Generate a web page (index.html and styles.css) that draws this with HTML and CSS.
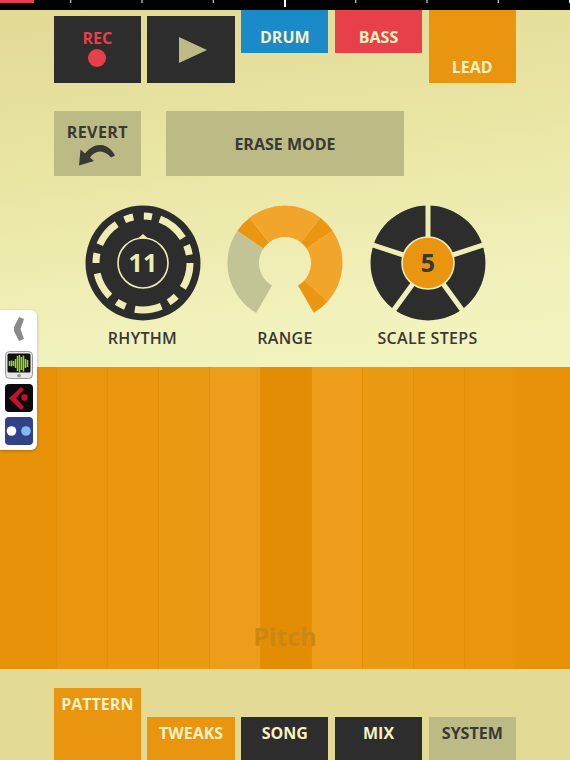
FILE: index.html
```html
<!DOCTYPE html>
<html lang="en">
<head>
  <meta charset="UTF-8" />
  <title>Pattern</title>
  <link rel="stylesheet" href="styles.css">
</head>
<body>
  <div class="app">

    <!-- TOP PANEL -->
    <section class="panel">
      <div class="ruler"></div>

      <div class="keys">
        <button class="key dark rec">REC<span class="dot"></span></button>
        <button class="key dark play">
          <svg width="28" height="26" viewBox="0 0 28 26"><polygon points="0,0 28,13 0,26" /></svg>
        </button>
        <button class="key short blue">DRUM</button>
        <button class="key short red">BASS</button>
        <button class="key orange lead">LEAD</button>
      </div>

      <div class="tools">
        <button class="tool revert">REVERT
          <svg width="38" height="22" viewBox="0 0 38 22"><path d="M1 21.5 L2.5 5.5 L7 9.5 C12 3.5 17 .5 23 1 C29 1.5 34 5.5 37 11.5 L33 13.5 C30 10 26 7.5 22 7.5 C18 7.5 14.5 10 12 13.5 L16 17 Z" /></svg>
        </button>
        <button class="tool erase">ERASE MODE</button>
      </div>

      <div class="dials">
        <div class="dial">
          <svg width="116" height="116" viewBox="-58 -58 116 116">
            <circle r="57.5" fill="#2e2d2d" />
            <circle r="47" fill="none" stroke="#eeedb4" stroke-width="7" pathLength="360" transform="rotate(-89)"
              stroke-dasharray="10 10 37 10 12 10 32 13 12 10 33 12 12 11 32 13 12 11 33 11 11 13" />
            <circle r="25" fill="none" stroke="#eeedb4" stroke-width="1.6" />
            <polygon points="-5,-24.5 0,-29 5,-24.5" fill="#eeedb4" />
            <text class="dial-num light" y="9">11</text>
          </svg>
          <span>RHYTHM</span>
        </div>
        <div class="dial">
          <svg width="116" height="116" viewBox="-58 -58 116 116">
            <path fill="#c3c495" d="M-28.75 49.8 A57.5 57.5 0 0 1 -47.7 -32.2 L-21.6 -14.5 A26 26 0 0 0 -13 22.5 Z" />
            <path fill="#ea9611" d="M-47.7 -32.2 A57.5 57.5 0 0 1 -35.4 -45.3 L-16 -20.5 A26 26 0 0 0 -21.6 -14.5 Z" />
            <path fill="#f1a52b" d="M-35.4 -45.3 A57.5 57.5 0 0 1 35.4 -45.3 L16 -20.5 A26 26 0 0 0 -16 -20.5 Z" />
            <path fill="#ea9611" d="M35.4 -45.3 A57.5 57.5 0 0 1 47.7 -32.2 L21.6 -14.5 A26 26 0 0 0 16 -20.5 Z" />
            <path fill="#f1a52b" d="M47.7 -32.2 A57.5 57.5 0 0 1 42.7 38.5 L19.3 17.4 A26 26 0 0 0 21.6 -14.5 Z" />
            <path fill="#ea9611" d="M42.7 38.5 A57.5 57.5 0 0 1 28.75 49.8 L13 22.5 A26 26 0 0 0 19.3 17.4 Z" />
          </svg>
          <span>RANGE</span>
        </div>
        <div class="dial">
          <svg width="116" height="116" viewBox="-58 -58 116 116">
            <mask id="spokes">
              <circle r="58" fill="#fff" />
              <g stroke="#000" stroke-width="5">
                <line x1="0" y1="0" x2="0" y2="-60" />
                <line x1="0" y1="0" x2="0" y2="-60" transform="rotate(72)" />
                <line x1="0" y1="0" x2="0" y2="-60" transform="rotate(144)" />
                <line x1="0" y1="0" x2="0" y2="-60" transform="rotate(216)" />
                <line x1="0" y1="0" x2="0" y2="-60" transform="rotate(288)" />
              </g>
            </mask>
            <circle r="57.5" fill="#2e2d2d" mask="url(#spokes)" />
            <circle r="26" fill="#e9950f" stroke="#eeedb4" stroke-width="1.6" />
            <text class="dial-num" y="9">5</text>
          </svg>
          <span>SCALE STEPS</span>
        </div>
      </div>
    </section>

    <!-- PITCH PAD -->
    <section class="pad">
      <div class="strip s1"></div>
      <div class="strip s2"></div>
      <div class="strip s3"></div>
      <div class="strip s4"></div>
      <div class="strip s5"></div>
      <div class="strip s4"></div>
      <div class="strip s3"></div>
      <div class="strip s2"></div>
      <div class="strip s1"></div>
      <span class="pad-label">Pitch</span>
    </section>

    <!-- TABS -->
    <nav class="tabs">
      <button class="tab orange active">PATTERN</button>
      <button class="tab orange">TWEAKS</button>
      <button class="tab dark">SONG</button>
      <button class="tab dark">MIX</button>
      <button class="tab khaki">SYSTEM</button>
    </nav>

    <!-- APP SWITCHER -->
    <aside class="switcher">
      <svg class="chevron" width="10" height="24" viewBox="0 0 10 24"><polygon points="5,0 10,2 6.5,12 10,22 5,24 0,14 0,10" /></svg>
      <svg width="28" height="28" viewBox="0 0 28 28">
        <rect x=".5" y=".5" width="27" height="27" rx="4" fill="#e6e6e6" stroke="#999" />
        <rect x="2.5" y="2.5" width="23" height="19" rx="1.5" fill="#111" />
        <path stroke="#9ad82a" stroke-width="1.5" d="M4.5 10v5M6.5 9.5v6M8.5 10v5M10.5 8v9M12.5 5v15M14.5 4v17M16.5 6v13M18.5 4.5v16M20.5 8v9M22.5 9v7" />
        <circle cx="14" cy="24.6" r="1.9" fill="#999" />
      </svg>
      <svg width="28" height="28" viewBox="0 0 28 28">
        <rect width="28" height="28" rx="4" fill="#0b0b0b" />
        <polygon points="16,3 19,5.5 11,14 19,23 16,26 4,14.5" fill="#c8102e" />
        <circle cx="19.5" cy="13.5" r="3.2" fill="#c8102e" />
      </svg>
      <svg width="28" height="28" viewBox="0 0 28 28">
        <rect width="28" height="28" rx="4" fill="#2f4386" />
        <circle cx="6.5" cy="14" r="4.8" fill="#fff" />
        <circle cx="21" cy="14" r="4.8" fill="#82baf5" />
      </svg>
    </aside>
  </div>
</body>
</html>
```

FILE: styles.css
```css
:root {
  --dark: #2e2d2d;
  --khaki: #bdbb85;
  --orange: #e9950f;
  --red: #e8404a;
  --blue: #1b8ac8;
  --cream: #f6f2c2;
  --ink: #3a3834;
}
* {
  box-sizing: border-box;
}
body {
  margin: 0;
  font-family: 'Open Sans', sans-serif;
  background: #e3da96;
  overflow: hidden;
}
button {
  border: none;
  padding: 0;
  font: inherit;
  font-weight: 700;
  font-size: 16px;
  border-radius: 0;
}
.app {
  position: relative;
  width: 570px;
  height: 760px;
  display: flex;
  flex-direction: column;
}

/* top panel */
.panel {
  height: 367px;
  background: linear-gradient(172deg, #e2d994 0%, #e9e5a3 40%, #f2f2bd 82%, #f3f3bf 100%);
}
.ruler {
  height: 10px;
  background-color: #000;
  background-image:
    linear-gradient(var(--red), var(--red)),
    linear-gradient(#fff, #fff),
    linear-gradient(to right, transparent 70.5px, #fff 70.5px);
  background-repeat: no-repeat, no-repeat, repeat-x;
  background-size: 34px 3px, 2px 7px, 71.25px 3px;
  background-position: 0 0, 284px 0, 0 0;
}
.keys {
  display: grid;
  grid-template-columns: repeat(5, 87.3px);
  column-gap: 6.45px;
  align-items: start;
  padding-left: 53.7px;
}
.key {
  height: 73px;
}
.dark { background: var(--dark); color: var(--cream); }
.orange { background: var(--orange); color: var(--cream); }
.khaki { background: var(--khaki); color: var(--ink); }
.blue { background: var(--blue); color: var(--cream); }
.red { background: var(--red); color: var(--cream); }

.rec, .play {
  height: 67px;
  margin-top: 6px;
}
.rec {
  display: flex;
  flex-direction: column;
  align-items: center;
  color: var(--red);
  padding-top: 11px;
  line-height: 22px;
}
.dot {
  width: 18px;
  height: 18px;
  border-radius: 50%;
  background: var(--red);
}
.play svg {
  display: block;
  margin-left: 31.5px;
  fill: var(--khaki);
}
.key.short {
  height: 43px;
  padding-top: 10px;
}
.lead {
  display: flex;
  align-items: flex-end;
  justify-content: center;
  padding-bottom: 5px;
}

.tools {
  display: flex;
  gap: 25.3px;
  padding: 28px 0 0 53.7px;
}
.tool {
  height: 65px;
  background: var(--khaki);
  color: var(--ink);
}
.revert {
  width: 87.3px;
  display: flex;
  flex-direction: column;
  align-items: center;
  padding-top: 9px;
  line-height: 24px;
  letter-spacing: 0.4px;
}
.revert svg {
  fill: var(--ink);
}
.erase {
  width: 237.4px;
}

.dials {
  display: flex;
  gap: 26.5px;
  padding: 29px 0 0 84.5px;
}
.dial {
  width: 116px;
  display: flex;
  flex-direction: column;
  align-items: center;
  gap: 6px;
  font-weight: 600;
  font-size: 16px;
  line-height: 22px;
  letter-spacing: 0.3px;
  color: var(--ink);
  white-space: nowrap;
}
.dial svg {
  display: block;
}
.dial-num {
  font-weight: 700;
  font-size: 25px;
  text-anchor: middle;
  fill: var(--ink);
}
.dial-num.light {
  fill: #eeedb4;
}

/* pitch pad */
.pad {
  position: relative;
  height: 301.5px;
  padding: 0 55px 0 56px;
  background: #e8920a;
  display: flex;
}
.strip {
  flex: 1;
  border-left: 1px solid #e58f09;
}
.s1 { background: #e9950e; }
.s2 { background: #ea970f; }
.s3 { background: #eb9a14; }
.s4 { background: #ed9d19; }
.s5 { background: #e38d05; }
.pad-label {
  position: absolute;
  left: 0;
  right: 0;
  bottom: 16px;
  text-align: center;
  font-weight: 700;
  font-size: 25px;
  color: #c98714;
}

/* tabs */
.tabs {
  flex: 1;
  display: grid;
  grid-template-columns: repeat(5, 87.3px);
  column-gap: 6.45px;
  align-items: end;
  padding-left: 53.7px;
  background: #e3da96;
}
.tab {
  height: 43px;
  padding-bottom: 11px;
}
.tab.active {
  height: 72px;
  padding-bottom: 40px;
}

/* app switcher */
.switcher {
  position: absolute;
  left: 0;
  top: 310px;
  width: 37px;
  height: 140px;
  padding: 7px 0 0 5px;
  background: #fff;
  border-radius: 0 6px 6px 0;
  box-shadow: 0 1px 3px rgba(0,0,0,0.25);
  display: flex;
  flex-direction: column;
  gap: 5px;
}
.switcher svg {
  display: block;
}
.chevron {
  margin: 0 0 5px 9px;
  fill: #8a8a8a;
}
```
